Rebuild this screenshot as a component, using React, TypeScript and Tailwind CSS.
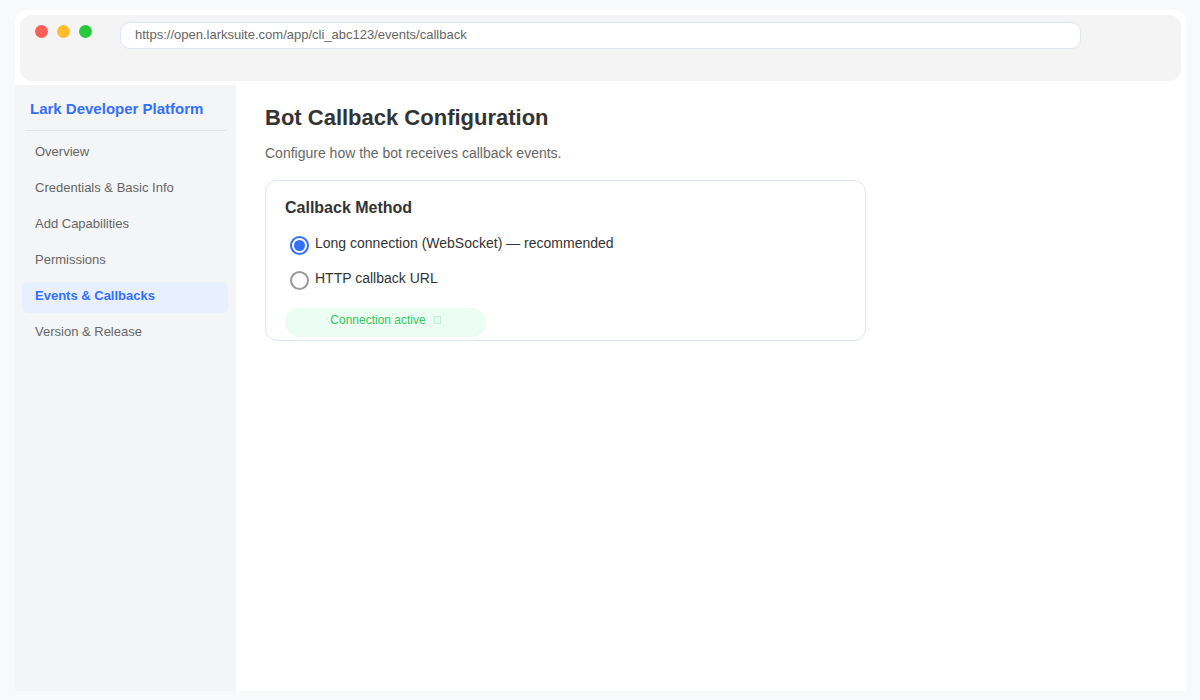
const navItems = [
  'Overview',
  'Credentials & Basic Info',
  'Add Capabilities',
  'Permissions',
  'Events & Callbacks',
  'Version & Release',
]

function App() {
  return (
    <div className="h-[700px] overflow-hidden bg-[#f8f9fb] pt-[10px] pl-[15px] pr-[14px] pb-[9px] font-['Liberation_Sans',Arial,sans-serif]">
      <div className="flex h-[681px] flex-col rounded-t-[12px] bg-white">
        {/* browser bar */}
        <div className="mx-[5px] mt-[5px] flex h-[66px] items-start rounded-[12px] bg-[#f4f4f5]">
          <div className="mt-[10px] ml-[15px] flex gap-[9px]">
            <span className="h-[13px] w-[13px] rounded-full bg-[#ff5f56]" />
            <span className="h-[13px] w-[13px] rounded-full bg-[#ffbd2e]" />
            <span className="h-[13px] w-[13px] rounded-full bg-[#27c93f]" />
          </div>
          <div className="mt-[7px] ml-[28px] h-[27px] w-[961px] rounded-[10px] border border-[#e0e6f0] bg-white px-[14px] text-[13px] leading-[23px] text-[#666666]">
            https://open.larksuite.com/app/cli_abc123/events/callback
          </div>
        </div>

        <div className="mt-[4px] flex flex-1">
          {/* sidebar */}
          <div className="w-[221px] bg-[#f4f5f7] pr-[8px] pl-[7px]">
            <div className="mr-[2px] ml-[3px] h-[46px] border-b border-[#e0e6f0] px-[5px] pt-[15px] text-[15px] leading-[18px] font-bold text-[#3370ff]">
              Lark Developer Platform
            </div>
            <div className="mt-[7px] flex flex-col gap-[5px]">
              {navItems.map((item) =>
                item === 'Events & Callbacks' ? (
                  <div key={item} className="h-[31px] rounded-[6px] bg-[#e8f0ff] px-[13px] pt-[6px] text-[13px] leading-[16px] font-bold text-[#3370ff]">
                    {item}
                  </div>
                ) : (
                  <div key={item} className="h-[31px] px-[13px] pt-[6px] text-[13px] leading-[16px] text-[#666666]">
                    {item}
                  </div>
                ),
              )}
            </div>
          </div>

          {/* content */}
          <div className="flex-1 px-[29px] pt-[20px]">
            <h1 className="text-[22px] leading-[26px] font-bold text-[#333333]">Bot Callback Configuration</h1>
            <p className="mt-[14px] text-[14px] leading-[16px] text-[#666666]">Configure how the bot receives callback events.</p>

            <div className="mt-[19px] h-[161px] w-[601px] rounded-[12px] border border-[#e0e6f0] bg-white px-[19px] pt-[18px]">
              <h2 className="text-[16px] leading-[18px] font-bold text-[#333333]">Callback Method</h2>
              <label className="mt-[17px] ml-[5px] flex h-[26px] items-start gap-[6px] text-[14px] text-[#333333]">
                <span className="mt-[2px] flex h-[19px] w-[19px] items-center justify-center rounded-full border-2 border-[#3370ff]">
                  <span className="h-[11px] w-[11px] rounded-full bg-[#3370ff]" />
                </span>
                <span className="mt-[1px] leading-[16px]">Long connection (WebSocket) — recommended</span>
              </label>
              <label className="mt-[9px] ml-[5px] flex h-[26px] items-start gap-[6px] text-[14px] text-[#333333]">
                <span className="mt-[2px] h-[19px] w-[19px] rounded-full border-2 border-[#999999]" />
                <span className="mt-[1px] leading-[16px]">HTTP callback URL</span>
              </label>
              <div className="mt-[13px] flex h-[29px] w-[201px] items-start justify-center gap-[8px] rounded-[20px] bg-[#ecfdf3] pt-[5px] text-[12px] leading-[14px] text-[#34c759]">
                Connection active
                <span className="mt-[3px] h-[8px] w-[7px] border border-[#bdeecf]" />
              </div>
            </div>
          </div>
        </div>
      </div>
    </div>
  )
}

export default App
